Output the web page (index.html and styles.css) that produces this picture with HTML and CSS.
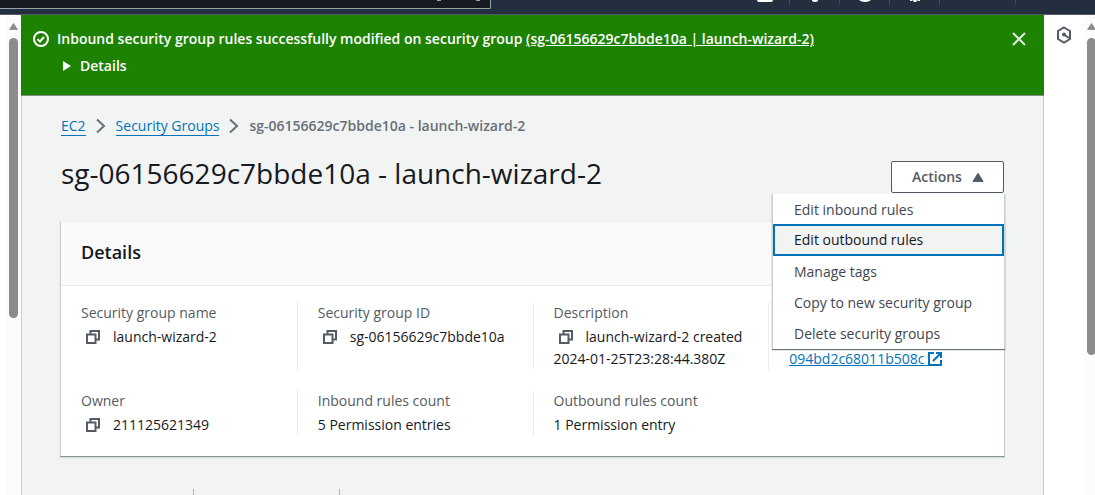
FILE: index.html
```html
<!DOCTYPE html>
<html lang="en">
<head>
<meta charset="utf-8">
<title>Security group details</title>
<link rel="stylesheet" href="styles.css">
</head>
<body>
<svg class="sprite" aria-hidden="true">
  <symbol id="copy" viewBox="0 0 14 14"><path d="M1 4.500h8.500V13H1zM4.500 4.500V1H13v8.500H9.500" fill="none" stroke="currentColor" stroke-width="2"/></symbol>
  <symbol id="up" viewBox="0 0 10 8"><path d="M5 0.5 9.5 7.5H0.5z" fill="currentColor" stroke="currentColor" stroke-linejoin="round"/></symbol>
  <symbol id="chevron" viewBox="0 0 10 16"><path d="M1 1.500l7 6.500-7 6.500" fill="none" stroke="currentColor" stroke-width="2"/></symbol>
</svg>
<header class="topbar">
  <div class="search">
    <svg width="44" height="2" viewBox="0 0 44 2" aria-hidden="true"><path d="M0 .5h4M39 .5h4" stroke="#95a5a6"/></svg>
  </div>
  <div class="tools">
    <span class="tool tool-first"><svg width="16" height="14" viewBox="0 0 16 14"><path d="M0 0h16a2 2 0 0 1-2 2H2a2 2 0 0 1-2-2z" fill="#fff"/></svg></span>
    <span class="tool tool-bell"><svg width="16" height="14" viewBox="0 0 16 14"><path d="M5 0h6v1L9 2H7L5 1z" fill="#fff"/></svg></span>
    <span class="tool tool-help"><svg width="16" height="14" viewBox="0 0 16 14"><path d="M2 0h12q-2 2-6 2T2 0z" fill="#fff"/></svg></span>
    <span class="tool tool-gear"><svg width="16" height="14" viewBox="0 0 16 14"><path d="M3 0h10v1h-2v-.5H9.500v1.500h-3V.5H5V1H3z" fill="#fff"/></svg></span>
    <span class="tool tool-region"></span>
  </div>
</header>
<div class="shell">
  <aside class="left"><div class="scrollbar"><svg width="9" height="7" viewBox="0 0 10 8"><use href="#up"/></svg><div class="thumb"></div></div></aside>
  <main class="main">
    <section class="flash">
      <svg class="flash-icon" width="16" height="16" viewBox="0 0 16 16"><g fill="none" stroke="#fff" stroke-width="2"><circle cx="8" cy="8" r="7"/><path d="M4.500 8.200l2.500 2.300 4-4.500"/></g></svg>
      <div class="flash-text">
        <div>Inbound security group rules successfully modified on security group <a href="#">(sg-06156629c7bbde10a | launch-wizard-2)</a></div>
        <button class="expand"><svg width="8" height="10" viewBox="0 0 8 10"><path d="M0 0l8 5-8 5z" fill="#fff"/></svg>Details</button>
      </div>
      <button class="close" aria-label="Close"><svg width="14" height="14" viewBox="0 0 14 14"><path d="M1 1l12 12M13 1L1 13" stroke="#e0eadf" stroke-width="2"/></svg></button>
    </section>
    <div class="content">
      <nav class="crumbs">
        <a href="#">EC2</a>
        <svg width="10" height="16"><use href="#chevron"/></svg>
        <a href="#">Security Groups</a>
        <svg width="10" height="16"><use href="#chevron"/></svg>
        <span>sg-06156629c7bbde10a - launch-wizard-2</span>
      </nav>
      <div class="heading">
        <h1>sg-06156629c7bbde10a - launch-wizard-2</h1>
        <div class="dropdown">
          <button class="actions">Actions<svg width="12" height="9" viewBox="0 0 10 8"><use href="#up"/></svg></button>
          <div class="menu">
            <button>Edit inbound rules</button>
            <button class="focused">Edit outbound rules</button>
            <button>Manage tags</button>
            <button>Copy to new security group</button>
            <button>Delete security groups</button>
          </div>
        </div>
      </div>
      <section class="panel">
        <h2>Details</h2>
        <dl class="grid">
          <div class="cell"><dt>Security group name</dt><dd><button class="copy" aria-label="Copy name"><svg width="14" height="14"><use href="#copy"/></svg></button>launch-wizard-2</dd></div>
          <div class="cell"><dt>Security group ID</dt><dd><button class="copy" aria-label="Copy ID"><svg width="14" height="14"><use href="#copy"/></svg></button>sg-06156629c7bbde10a</dd></div>
          <div class="cell"><dt>Description</dt><dd><button class="copy" aria-label="Copy description"><svg width="14" height="14"><use href="#copy"/></svg></button>launch-wizard-2 created 2024-01-25T23:28:44.380Z</dd></div>
          <div class="cell cell-end"><dd><a href="#">094bd2c68011b508c <svg width="14" height="14" viewBox="0 0 14 14"><path d="M6 1H1v12h12V8M8 1h5v5M13 1L5 9" fill="none" stroke="currentColor" stroke-width="2"/></svg></a></dd></div>
          <div class="cell"><dt>Owner</dt><dd><button class="copy" aria-label="Copy owner"><svg width="14" height="14"><use href="#copy"/></svg></button>211125621349</dd></div>
          <div class="cell"><dt>Inbound rules count</dt><dd>5 Permission entries</dd></div>
          <div class="cell"><dt>Outbound rules count</dt><dd>1 Permission entry</dd></div>
        </dl>
      </section>
      <div class="tabs"><span></span><span></span></div>
    </div>
  </main>
  <aside class="right">
    <button class="hex" aria-label="Open panel"><svg width="16" height="18" viewBox="0 0 16 18"><path d="M8 1.500l6 3.500v8l-6 3.500L2 13V5z" fill="none" stroke="currentColor" stroke-width="2"/><circle cx="8" cy="8.500" r="2" fill="currentColor"/><path d="M8 8.500l5 3.500" stroke="currentColor" stroke-width="2"/></svg></button>
    <div class="scrollbar"><svg width="9" height="7" viewBox="0 0 10 8"><use href="#up"/></svg><div class="thumb"></div></div>
  </aside>
</div>
</body>
</html>
```
FILE: styles.css
```css
* { box-sizing: border-box; }
body { margin: 0; height: 100vh; overflow: hidden; display: flex; flex-direction: column; background: #fff; color: #16191f; font: 14px/22px "Open Sans", sans-serif; }
svg { display: block; flex: none; }
button { font: inherit; color: inherit; background: none; border: 0; padding: 0; text-align: left; }
a { color: #0073bb; }
h1, h2, dl, dd { margin: 0; }
.sprite { position: absolute; width: 0; height: 0; }

.topbar { flex: none; display: flex; justify-content: space-between; align-items: flex-start; height: 15px; background: #232f3e; border-bottom: 1px solid #545b64; }
.search { width: 491px; height: 9px; padding-left: 437px; background: #161b22; border: 1px solid #95a5a6; border-width: 0 1px 1px 0; border-radius: 0 0 2px 0; }
.tools { display: flex; padding-right: 79px; }
.tool { display: flex; justify-content: center; width: 50px; height: 5px; border-right: 1px solid #414d5c; }
.tool-region { width: 76px; }

.shell { flex: 1; min-height: 0; display: flex; }
.left { width: 21px; flex: none; display: flex; justify-content: flex-end; }
.scrollbar { width: 15px; background: #fcfcfc; padding: 8px 3px 0; color: #8b8b8b; }
.thumb { width: 9px; height: 280px; margin-top: 8px; border-radius: 5px; background: #8b8b8b; }
.main { flex: 1; min-width: 0; background: #f2f3f3; border-right: 1px solid #c8cdcd; }
.flash { display: flex; align-items: flex-start; height: 81px; margin-right: -1px; padding: 13px 18px 0 12px; background: #1d8102; color: #fff; font-weight: 600; border-bottom: 1px solid #7f8f86; }
.flash-icon { margin-top: 3px; }
.flash-text { flex: 1; padding-left: 8px; }
.flash a { color: #fff; }
.expand { display: flex; align-items: center; gap: 9px; margin-top: 5px; padding-left: 6px; }
.close { margin-top: 4px; }
.content { padding: 19px 39px 0; border-left: 1px solid #c8cdcd; }
.crumbs { display: flex; align-items: center; gap: 10px; color: #687078; }
.crumbs a { line-height: 18px; text-decoration: none; border-bottom: 1px solid #0073bb; }
.crumbs span { font-weight: 600; }
.heading { display: flex; justify-content: space-between; align-items: flex-start; height: 84px; padding-top: 18px; }
h1 { font-size: 28px; font-weight: 400; line-height: 36px; }
.dropdown { position: relative; padding-top: 6px; margin-right: -1px; }
.actions { display: flex; align-items: center; gap: 10px; height: 32px; width: 113px; margin-right: 1px; padding-left: 20px; border: 1px solid #545b64; border-radius: 2px; background: #fff; color: #545b64; font-weight: 600; }
.menu { position: absolute; z-index: 1; top: 39px; right: 0; width: 233px; background: #fff; border-left: 1px solid #ccd1d1; border-right: 1px solid #ccd1d1; box-shadow: 0 1px 1px #687078; }
.menu button { display: block; width: 100%; height: 31px; padding-left: 21px; color: #414750; }
.menu .focused { height: 32px; margin: -1px 0 0; padding-left: 19px; border: 2px solid #0073bb; background: #f2f3f3; color: #16191f; }
.panel { margin-left: -1px; margin-right: -1px; background: #fff; border: 1px solid #c8cdcd; border-top-color: #eaeded; border-bottom-color: #879596; box-shadow: 0 1px 1px #d5dbdb; }
h2 { padding: 20px; height: 64px; background: #fafafa; border-bottom: 1px solid #eaeded; font-size: 18px; font-weight: 600; line-height: 20px; }
.grid { display: grid; grid-template-columns: repeat(4, 1fr); row-gap: 20px; padding: 16px 0 20px; }
.cell { min-width: 0; padding-left: 20px; border-left: 1px solid #eaeded; }
.cell:nth-child(4n + 1) { border-left: 0; }
.cell-end { display: flex; align-items: flex-end; }
dt { margin-bottom: 2px; color: #545b64; }
.copy { display: inline-block; vertical-align: -2px; line-height: 14px; padding: 0 13px 0 5px; color: #545b64; }
dd a svg { display: inline-block; vertical-align: -2px; }
.tabs { display: flex; padding-top: 32px; }
.tabs span { width: 146px; height: 30px; border-right: 1px solid #aab7b8; }
.tabs span:first-child { width: 133px; }
.right { width: 51px; flex: none; display: flex; justify-content: space-between; padding-left: 12px; color: #545b64; }
.hex { align-self: flex-start; padding-top: 11px; }
.right .scrollbar { width: 11px; padding-right: 0; overflow: hidden; }
.right .thumb { height: 317px; }
```
